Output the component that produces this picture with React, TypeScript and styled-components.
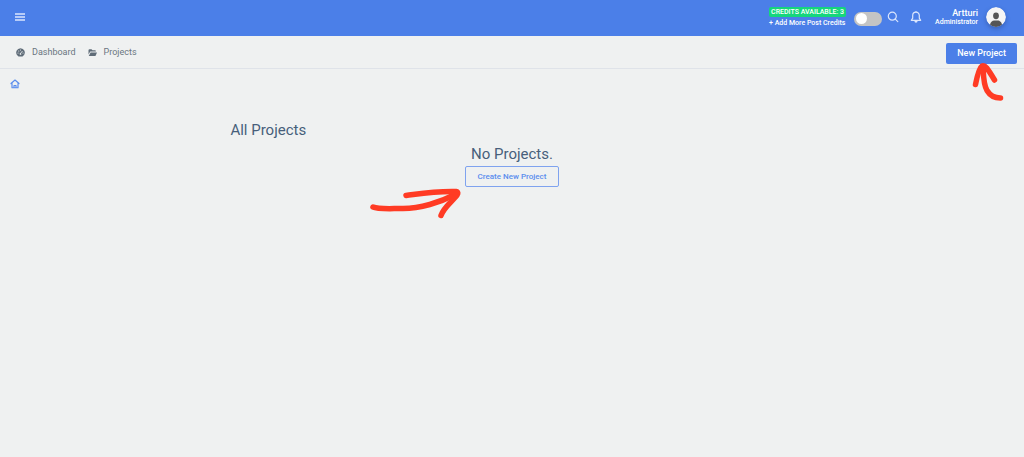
import React from "react";
import styled, { createGlobalStyle } from "styled-components";

const blue = "#4b7fe8";
const slate = "#475f7b";
const red = "#ff3b24";

const GlobalStyle = createGlobalStyle`
  * { box-sizing: border-box; }
  body {
    margin: 0;
    background: #eff1f1;
    color: ${slate};
    font-family: Roboto, "Liberation Sans", sans-serif;
  }
  button { font-family: inherit; cursor: pointer; }
  svg { display: block; }
`;

const Page = styled.div`
  min-height: 100vh;
`;

const Header = styled.header`
  display: flex;
  align-items: center;
  justify-content: space-between;
  height: 36px;
  padding: 0 18px 2px 14px;
  background: ${blue};
  color: #fff;
`;

const IconButton = styled.button`
  display: flex;
  padding: 0;
  border: 0;
  background: none;
  color: #dbe6fd;
`;

const HeaderTools = styled.div`
  display: flex;
  align-items: center;
`;

const Credits = styled.div`
  display: flex;
  flex-direction: column;
  align-items: flex-start;
  gap: 1px;
  margin-right: 8px;
`;

const Badge = styled.span`
  padding: 0 2px;
  border-radius: 2px;
  background: #15d67c;
  font-size: 7px;
  font-weight: 500;
  line-height: 10px;
  white-space: nowrap;
`;

const CreditsLink = styled.a`
  color: #fff;
  font-size: 7px;
  font-weight: 500;
  line-height: 10px;
  text-decoration: none;
  white-space: nowrap;
`;

const Switch = styled.input`
  appearance: none;
  display: flex;
  align-items: center;
  width: 28px;
  height: 14px;
  margin: 3px 5px 0 0;
  padding: 0 2px;
  border-radius: 7px;
  background: #c4c4c4;
  cursor: pointer;

  &::before {
    content: "";
    width: 11px;
    height: 11px;
    border-radius: 50%;
    background: #fff;
  }
  &:checked { justify-content: flex-end; }
`;

const Actions = styled.div`
  display: flex;
  gap: 11px;
  margin-right: 13px;
`;

const User = styled.div`
  display: flex;
  align-items: center;
  gap: 8px;
`;

const UserText = styled.div`
  display: flex;
  flex-direction: column;
  align-items: flex-end;
  font-weight: 500;
`;

const UserName = styled.span`
  font-size: 9px;
  line-height: 10px;
`;

const UserRole = styled.span`
  font-size: 7px;
  line-height: 9px;
`;

const Avatar = styled.svg`
  border-radius: 50%;
  box-shadow: 0 2px 4px rgba(30, 50, 100, 0.35);
`;

const NavBar = styled.nav`
  display: flex;
  align-items: center;
  justify-content: space-between;
  height: 33px;
  padding: 0 7px 0 16px;
  border-bottom: 1px solid #dfe3e9;
`;

const NavLinks = styled.div`
  display: flex;
  gap: 12px;
`;

const NavLink = styled.a`
  display: flex;
  align-items: center;
  gap: 7px;
  color: #6a7680;
  font-size: 9px;
  line-height: 12px;
  text-decoration: none;
`;

const Annotated = styled.div`
  position: relative;
`;

const PrimaryButton = styled.button`
  display: block;
  height: 21px;
  margin-top: 2px;
  padding: 0 11px;
  border: 0;
  border-radius: 2px;
  background: ${blue};
  color: #fff;
  font-size: 9px;
  font-weight: 500;
`;

const OutlineButton = styled.button`
  display: block;
  height: 21px;
  padding: 0 12px;
  border: 1px solid #7fa3ef;
  border-radius: 2px;
  background: transparent;
  color: #5a8dee;
  font-size: 8px;
  font-weight: 500;
`;

const UpArrow = styled.svg`
  position: absolute;
  top: 20px;
  right: 13px;
  pointer-events: none;
`;

const SideArrow = styled.svg`
  position: absolute;
  top: 20px;
  right: 98px;
  pointer-events: none;
`;

const Breadcrumb = styled.nav`
  display: flex;
  padding: 10px 10px 0;
`;

const HomeLink = styled.a`
  color: #5a8dee;
`;

const Content = styled.main`
  width: 55%;
  margin: 31px auto 0;
`;

const Title = styled.h1`
  margin: 0;
  font-size: 15px;
  font-weight: 400;
  line-height: 20px;
`;

const Empty = styled.section`
  display: flex;
  flex-direction: column;
  align-items: center;
  gap: 2px;
  padding-top: 4px;
`;

const EmptyTitle = styled.h2`
  margin: 0;
  font-size: 15px;
  font-weight: 400;
  line-height: 20px;
`;

export default function App() {
  return (
    <Page>
      <GlobalStyle />
      <Header>
        <IconButton aria-label="Menu">
          <svg width="12" height="12" viewBox="0 0 12 12" stroke="currentColor" strokeWidth="1.6">
            <path d="M1 3h10M1 6h10M1 9h10" />
          </svg>
        </IconButton>
        <HeaderTools>
          <Credits>
            <Badge>CREDITS AVAILABLE: 3</Badge>
            <CreditsLink href="#credits">+ Add More Post Credits</CreditsLink>
          </Credits>
          <Switch type="checkbox" aria-label="Toggle mode" />
          <Actions>
            <IconButton aria-label="Search">
              <svg width="12" height="12" viewBox="0 0 12 12" fill="none" stroke="currentColor" strokeWidth="1.2" strokeLinecap="round">
                <circle cx="5.3" cy="5.2" r="4" />
                <path d="M8.3 8.2l2.500 2.500" />
              </svg>
            </IconButton>
            <IconButton aria-label="Notifications">
              <svg width="12" height="12" viewBox="0 0 12 12" fill="none" stroke="currentColor" strokeWidth="1.2" strokeLinejoin="round">
                <path d="M6 1.2C4 1.2 2.700 2.700 2.700 4.600v2.600L1.300 9.300h9.400L9.300 7.200V4.600C9.300 2.700 8 1.200 6 1.200z" />
                <path d="M4.400 10h3.200a1.600 1.700 0 0 1-3.200 0z" fill="currentColor" stroke="none" />
                <path d="M6 .3v.9" />
              </svg>
            </IconButton>
          </Actions>
          <User>
            <UserText>
              <UserName>Artturi</UserName>
              <UserRole>Administrator</UserRole>
            </UserText>
            <Avatar width="20" height="20" viewBox="0 0 20 20" role="img" aria-label="Artturi">
              <circle cx="10" cy="10" r="10" fill="#f5f5f5" />
              <ellipse cx="10" cy="8.800" rx="2.900" ry="3.400" fill="#555" />
              <path d="M4 18c.3-3.300 2.300-4.400 4.300-4.600h3.400c2 .2 4 1.300 4.300 4.600a10 10 0 0 1-12 0z" fill="#555" />
            </Avatar>
          </User>
        </HeaderTools>
      </Header>

      <NavBar>
        <NavLinks>
          <NavLink href="#dashboard">
            <svg width="9" height="9" viewBox="0 0 18 18">
              <path d="M9 .5a8.500 8.500 0 0 0-6 14.500l2 2h8l2-2A8.500 8.500 0 0 0 9 .5z" fill="#5f6c78" />
              <path d="M8 12l5-6" stroke="#eff1f1" strokeWidth="1.600" />
              <g fill="#eff1f1">
                <circle cx="9" cy="12" r="1.700" />
                <circle cx="4" cy="10" r="1.100" />
                <circle cx="5.500" cy="6" r="1.100" />
                <circle cx="9" cy="4" r="1.100" />
                <circle cx="14" cy="10" r="1.100" />
              </g>
            </svg>
            Dashboard
          </NavLink>
          <NavLink href="#projects">
            <svg width="9" height="9" viewBox="0 0 18 18" fill="#5f6c78">
              <path d="M1 4.500C1 3.200 1.800 2.500 3 2.500h4l2 2h5c1 0 1.700.7 1.700 1.700V7.200H4.500L1 13z" />
              <path d="M5.200 8.800H18l-2.600 6c-.3.700-.8 1.200-1.600 1.200H1.500z" />
            </svg>
            Projects
          </NavLink>
        </NavLinks>
        <Annotated>
          <PrimaryButton>New Project</PrimaryButton>
          <UpArrow width="32" height="42" viewBox="0 0 32 42" fill="none" stroke={red} strokeWidth="5.500" strokeLinecap="round" strokeLinejoin="round">
            <path d="M3.500 23.500C5 16 7 7 10 5c3-1.500 5.500 2.500 12.500 14" />
            <path d="M11 6C11.500 16 11.500 24 15 29.500c3 5 7 7.500 13.500 7.500" />
          </UpArrow>
        </Annotated>
      </NavBar>

      <Breadcrumb aria-label="Breadcrumb">
        <HomeLink href="#home" aria-label="Home">
          <svg width="10" height="10" viewBox="0 0 20 20" fill="none" stroke="currentColor" strokeWidth="2.400" strokeLinejoin="round" strokeLinecap="round">
            <path d="M2 9L10 2l8 7M4 9v8.500h12V9M8 17.500V13h4v4.500" />
          </svg>
        </HomeLink>
      </Breadcrumb>

      <Content>
        <Title>All Projects</Title>
        <Empty>
          <EmptyTitle>No Projects.</EmptyTitle>
          <Annotated>
            <OutlineButton>Create New Project</OutlineButton>
            <SideArrow width="96" height="36" viewBox="0 0 96 36" fill="none" stroke={red} strokeWidth="5.500" strokeLinecap="round" strokeLinejoin="round">
              <path d="M8 21c5 2.500 17 1.500 30 1.500 17 0 37-6 52-14" />
              <path d="M41 9.500C53 8 68 5 91 5.500c3 .5 2 3-1 6-5 6-11 10-14 18" />
            </SideArrow>
          </Annotated>
        </Empty>
      </Content>
    </Page>
  );
}
